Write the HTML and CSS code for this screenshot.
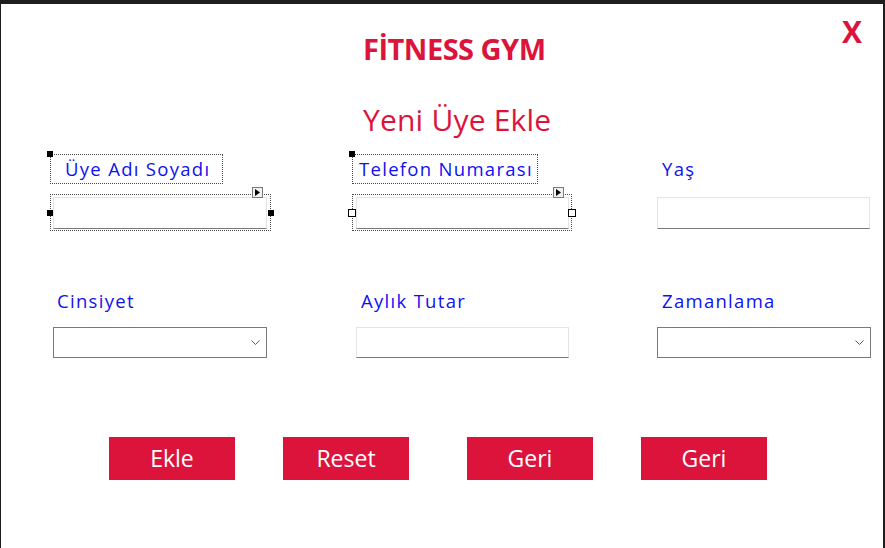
FILE: index.html
```html
<!DOCTYPE html>
<html lang="tr">
<head>
<meta charset="utf-8">
<title>Fitness Gym - Yeni Üye Ekle</title>
<link rel="stylesheet" href="styles.css">
</head>
<body>
<div class="window">
  <button class="close" type="button">X</button>
  <header class="head">
    <h1 class="brand">FİTNESS GYM</h1>
    <h2 class="subtitle">Yeni Üye Ekle</h2>
  </header>

  <div class="form">
    <div class="field c1">
      <div class="label-frame dotted">
        <span class="handle solid tl"></span>
        <span class="lbl">Üye Adı Soyadı</span>
      </div>
      <div class="input-frame dotted">
        <span class="smart"><svg width="5" height="7" viewBox="0 0 5 7"><path d="M0 0 L5 3.5 L0 7 Z" fill="#000"/></svg></span>
        <span class="handle solid ml"></span>
        <span class="handle solid mr"></span>
        <div class="tb"></div>
      </div>
    </div>

    <div class="field c2">
      <div class="label-frame dotted">
        <span class="handle solid tl"></span>
        <span class="lbl">Telefon Numarası</span>
      </div>
      <div class="input-frame dotted">
        <span class="smart"><svg width="5" height="7" viewBox="0 0 5 7"><path d="M0 0 L5 3.5 L0 7 Z" fill="#000"/></svg></span>
        <span class="handle hollow ml"></span>
        <span class="handle hollow mr"></span>
        <div class="tb"></div>
      </div>
    </div>

    <div class="field c3">
      <div class="label-frame">
        <span class="lbl">Yaş</span>
      </div>
      <div class="input-frame">
        <div class="tb"></div>
      </div>
    </div>

    <div class="field r2 c1">
      <span class="lbl2">Cinsiyet</span>
      <div class="select"><svg width="9" height="5" viewBox="0 0 9 5"><path d="M0.5 0.5 L4.5 4.5 L8.5 0.5" fill="none" stroke="#5a5a5a" stroke-width="1"/></svg></div>
    </div>

    <div class="field r2 c2">
      <span class="lbl2">Aylık Tutar</span>
      <div class="tb plain"></div>
    </div>

    <div class="field r2 c3">
      <span class="lbl2">Zamanlama</span>
      <div class="select"><svg width="9" height="5" viewBox="0 0 9 5"><path d="M0.5 0.5 L4.5 4.5 L8.5 0.5" fill="none" stroke="#5a5a5a" stroke-width="1"/></svg></div>
    </div>
  </div>

  <div class="actions">
    <button class="btn" type="button">Ekle</button>
    <button class="btn" type="button">Reset</button>
    <button class="btn wide-gap" type="button">Geri</button>
    <button class="btn" type="button">Geri</button>
  </div>
</div>
</body>
</html>
```

FILE: styles.css
```css
* { box-sizing: border-box; }

html, body {
  margin: 0;
  padding: 0;
  background: #ffffff;
}

body {
  font-family: "Open Sans", "Liberation Sans", sans-serif;
}

.window {
  position: relative;
  width: 885px;
  height: 548px;
  background: #ffffff;
  border-top: 4px solid #1e1e1e;
  border-left: 1px solid #1e1e1e;
  border-right: 2px solid #1e1e1e;
  overflow: hidden;
}

.close {
  position: absolute;
  top: 13px;
  right: 21px;
  margin: 0;
  padding: 0;
  border: 0;
  background: transparent;
  color: #dc143c;
  font-family: "Open Sans", "Liberation Sans", sans-serif;
  font-weight: 700;
  font-size: 30px;
  line-height: 30px;
  cursor: pointer;
}

.head {
  padding: 27px 0 0 362px;
}

.brand {
  margin: 0;
  color: #dc143c;
  font-size: 29px;
  font-weight: 700;
  line-height: 36px;
  letter-spacing: -0.5px;
}

.subtitle {
  margin: 35px 0 0 0;
  color: #dc143c;
  font-size: 30px;
  font-weight: 400;
  line-height: 36px;
  letter-spacing: 0.2px;
}

.form {
  display: grid;
  grid-template-columns: 302px 302px 1fr;
  row-gap: 56px;
  padding: 16px 0 0 49px;
}

.field {
  display: flex;
  flex-direction: column;
  align-items: flex-start;
}

.label-frame {
  position: relative;
  height: 30px;
  border: 1px solid transparent;
  padding-top: 0;
}

.dotted {
  border: 1px dotted #4a4a4a;
}

.lbl, .lbl2 {
  display: block;
  color: #1010f0;
  font-size: 18.5px;
  line-height: 28px;
  letter-spacing: 1.3px;
  white-space: nowrap;
}

.c1 .label-frame { width: 173px; padding-left: 14px; }
.c2 .label-frame { width: 186px; padding-left: 6px; }
.c3 .label-frame { width: 186px; padding-left: 7px; }

.input-frame {
  position: relative;
  margin-top: 10px;
  height: 37px;
  border: 1px solid transparent;
  padding: 2px 2px 1px 2px;
}
.input-frame.dotted { border: 1px dotted #4a4a4a; }

.c1 .input-frame { width: 221px; }
.c2 .input-frame { width: 220px; padding-left: 3px; }
.c3 .input-frame { width: 219px; }

.tb {
  width: 214px;
  height: 32px;
  background: #ffffff;
  border: 1px solid #e4e4e4;
  border-bottom: 1px solid #7a7a7a;
}
.c2 .tb, .c3 .tb { width: 213px; }

.handle {
  position: absolute;
  width: 6px;
  height: 6px;
  background: #000;
}
.handle.hollow {
  width: 8px;
  height: 8px;
  background: #fff;
  border: 1px solid #000;
}
.handle.tl { left: -4px; top: -4px; }
.handle.ml { left: -4px; top: 15px; }
.handle.mr { right: -4px; top: 15px; }
.handle.hollow.ml { left: -5px; top: 14px; }
.handle.hollow.mr { right: -5px; top: 14px; }

.smart {
  position: absolute;
  top: -8px;
  right: 7px;
  width: 11px;
  height: 11px;
  background: #f0f0f0;
  border: 1px solid #7a7a7a;
  display: flex;
  align-items: center;
  justify-content: center;
}

.r2 .lbl2 { margin-bottom: 12px; }
.r2.c1 .lbl2 { padding-left: 7px; }
.r2.c2 .lbl2 { padding-left: 9px; }
.r2.c3 .lbl2 { padding-left: 8px; }

.select {
  display: flex;
  align-items: center;
  justify-content: flex-end;
  width: 214px;
  height: 31px;
  padding-right: 6px;
  background: #ffffff;
  border: 1px solid #7a7a7a;
}
.r2.c1 .select { margin-left: 3px; }
.r2.c3 .select { margin-left: 3px; width: 214px; }

.tb.plain { margin-left: 4px; height: 31px; }

.actions {
  display: flex;
  gap: 48px;
  padding: 79px 0 0 108px;
}

.btn {
  width: 126px;
  height: 43px;
  margin: 0;
  padding: 0;
  border: 0;
  background: #dc143c;
  color: #ffffff;
  font-family: "Open Sans", "Liberation Sans", sans-serif;
  font-size: 23px;
  font-weight: 400;
  line-height: 43px;
  cursor: pointer;
}
.btn.wide-gap { margin-left: 10px; }
```
